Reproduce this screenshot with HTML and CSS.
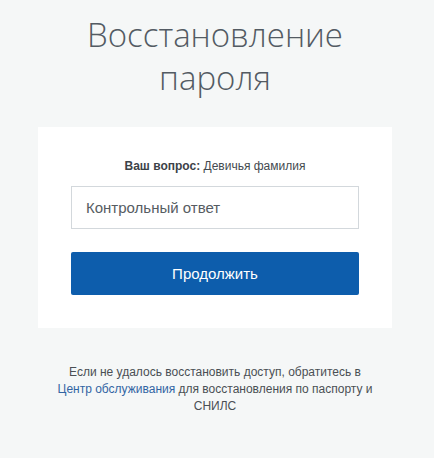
FILE: index.html
```html
<!DOCTYPE html>
<html lang="ru">
<head>
<meta charset="utf-8">
<title>Восстановление пароля</title>
<link rel="stylesheet" href="styles.css">
</head>
<body>
<div class="page">
  <h1 class="title">Восстановление<br>пароля</h1>
  <div class="card">
    <p class="question"><b>Ваш вопрос:</b> Девичья фамилия</p>
    <div class="field">Контрольный ответ</div>
    <div class="btn">Продолжить</div>
  </div>
  <p class="note">Если не удалось восстановить доступ, обратитесь в <a class="link" href="#">Центр обслуживания</a> для восстановления по паспорту и СНИЛС</p>
</div>
</body>
</html>
```
FILE: styles.css
```css
html, body {
  margin: 0;
  padding: 0;
  background: #f5f7f7;
}
body {
  font-family: "Liberation Sans", Arial, sans-serif;
  color: #4a4f54;
}
.page {
  width: 430px;
  padding-top: 13px;
}
.title {
  margin: 0;
  font-family: "Open Sans", sans-serif;
  font-weight: 300;
  font-size: 33px;
  line-height: 43px;
  color: #535b63;
  text-align: center;
}
.card {
  margin: 28px 38px 0;
  background: #fff;
  padding: 31px 33px 33px;
  height: 201px;
  box-sizing: border-box;
}
.question {
  margin: 0;
  font-size: 12px;
  line-height: 16px;
  text-align: center;
  color: #444a50;
}
.question b {
  font-weight: 700;
  color: #3c4248;
}
.field {
  margin-top: 12px;
  height: 43px;
  box-sizing: border-box;
  border: 1px solid #d3d8dc;
  padding: 0 14px;
  display: flex;
  align-items: center;
  font-size: 15px;
  color: #565c62;
}
.btn {
  margin-top: 23px;
  height: 43px;
  border-radius: 2px;
  background: #0d5dac;
  color: #fff;
  font-size: 15px;
  display: flex;
  align-items: center;
  justify-content: center;
}
.note {
  margin: 36px 52px 0;
  font-size: 12px;
  line-height: 17px;
  text-align: center;
  color: #4a4f54;
}
.link {
  color: #3265a3;
  text-decoration: none;
}
```
